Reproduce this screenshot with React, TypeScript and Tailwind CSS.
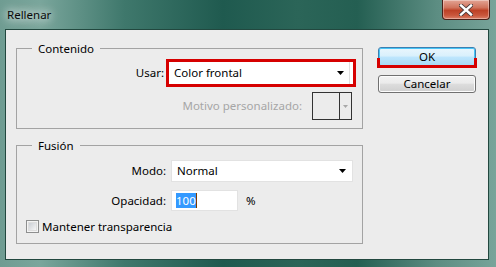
import React from "react";

function Arrow({ color = "#000" }: { color?: string }) {
  return (
    <svg width="7" height="4" viewBox="0 0 7 4" className="shrink-0">
      <path d="M0 0H7L3.5 4Z" fill={color} />
    </svg>
  );
}

export default function App() {
  return (
    <div
      className="flex h-[267px] w-[496px] flex-col overflow-hidden bg-[linear-gradient(90deg,#6f9c92_0%,#7aa69c_8%,#3f786c_25%,#1f5a4f_45%,#2b6558_60%,#245f52_72%,#5c8d82_88%,#78a49a_100%)] text-[11.5px] text-black"
      style={{ fontFamily: '"Noto Sans", "Open Sans", sans-serif' }}
    >
      {/* Title bar */}
      <div className="flex h-[29px] shrink-0 items-start justify-between">
        <div className="ml-[7px] mt-[6px] leading-[17px] text-[#0a0a0a] [text-shadow:0_0_8px_#ffffff,0_0_12px_#ffffff]">
          Rellenar
        </div>
        <div className="mr-[6px] flex h-[20px] w-[48px] items-center justify-center rounded-b-[4px] border border-t-0 border-[#4a2018] bg-[linear-gradient(180deg,#e3a595_0%,#d0735c_40%,#bd4126_55%,#c9563b_80%,#db8068_100%)] shadow-[inset_0_0_0_1px_rgba(255,255,255,0.35)]">
          <svg width="14" height="12" viewBox="0 0 14 12">
            <path d="M2 1.5L12 10.5M12 1.5L2 10.5" stroke="#4a3a3a" strokeWidth="4.2" strokeLinecap="square" />
            <path d="M2 1.5L12 10.5M12 1.5L2 10.5" stroke="#ffffff" strokeWidth="2.4" strokeLinecap="square" />
          </svg>
        </div>
      </div>

      {/* Client area */}
      <div className="ml-[5px] flex h-[231px] w-[484px] shrink-0 border border-[#22483f] bg-[#ececec]">
        {/* Left column */}
        <div className="flex w-[357px] flex-col pl-[10px] pt-[10px]">
          <fieldset className="w-[347px] border border-[#a3a3a3] pb-[8px]">
            <legend className="ml-[15px] px-[6px] leading-[17px]">Contenido</legend>
            <div className="flex flex-col pt-[2px]">
              <div className="flex items-center">
                <div className="w-[149px] pr-[2px] text-right">Usar:</div>
                <div className="flex h-[28px] w-[190px] items-center border-[3px] border-[#d60000] bg-white">
                  <div className="flex h-[22px] w-[181px] items-center justify-between border-r border-[#e0e0e0] pl-[5px] pr-[5px]">
                    <span>Color frontal</span>
                    <Arrow />
                  </div>
                </div>
              </div>
              <div className="mt-[5px] flex items-center justify-end pr-[10px]">
                <span className="mr-[10px] text-[#a6a6a6]">Motivo personalizado:</span>
                <div className="flex h-[28px] w-[40px] border border-[#333333]">
                  <div className="w-[27px] border-r border-[#333333]" />
                  <div className="flex flex-1 items-center justify-center">
                    <svg width="5" height="3" viewBox="0 0 5 3">
                      <path d="M0 0H5L2.5 3Z" fill="#a8a8a8" />
                    </svg>
                  </div>
                </div>
              </div>
            </div>
          </fieldset>

          <fieldset className="mt-[8px] w-[347px] border border-[#a3a3a3] pb-[8px]">
            <legend className="ml-[15px] px-[6px] leading-[17px]">Fusión</legend>
            <div className="flex flex-col pt-[6px]">
              <div className="flex items-center">
                <div className="w-[149px] text-right">Modo:</div>
                <div className="ml-[5px] flex h-[22px] w-[182px] items-center justify-between border border-[#e2e2e2] bg-white pl-[5px] pr-[6px]">
                  <span>Normal</span>
                  <Arrow />
                </div>
              </div>
              <div className="mt-[8px] flex items-center">
                <div className="w-[149px] text-right">Opacidad:</div>
                <div className="ml-[5px] flex h-[21px] w-[67px] items-center border border-[#e2e2e2] bg-white pl-[4px]">
                  <span className="bg-[#3399ff] leading-[15px] text-white">100</span>
                  <span className="h-[15px] w-[1px] bg-[#7a3a00]" />
                </div>
                <span className="ml-[8px]">%</span>
              </div>
              <div className="mt-[7px] flex items-center pl-[9px]">
                <div className="flex h-[13px] w-[13px] items-center justify-center border border-[#8e8f8f] bg-[#f4f4f4]">
                  <div className="h-[9px] w-[9px] border border-[#dedede] bg-[linear-gradient(135deg,#cbcfd5,#f6f6f6)]" />
                </div>
                <span className="ml-[3px]">Mantener transparencia</span>
              </div>
            </div>
          </fieldset>
        </div>

        {/* Buttons */}
        <div className="ml-[15px] flex flex-col pt-[17px]">
          <div className="relative">
            <div className="flex h-[20px] w-[98px] items-center justify-center rounded-[3px] border border-[#3c7fb1] bg-[linear-gradient(180deg,#eaf6fd_0%,#d9f0fc_45%,#bee6fd_50%,#a7d9f5_100%)] shadow-[inset_0_0_0_1px_#48c6f7]">
              OK
            </div>
            <div className="absolute bottom-[-1px] left-[-1px] right-[-1px] h-[10px] border-[3px] border-t-0 border-[#d60000]" />
          </div>
          <div className="mt-[8px] flex h-[18px] w-[98px] items-center justify-center rounded-[3px] border border-[#707070] bg-[linear-gradient(180deg,#f2f2f2_0%,#ebebeb_45%,#dddddd_50%,#cfcfcf_100%)] shadow-[inset_0_0_0_1px_#fcfcfc]">
            Cancelar
          </div>
        </div>
      </div>
    </div>
  );
}
